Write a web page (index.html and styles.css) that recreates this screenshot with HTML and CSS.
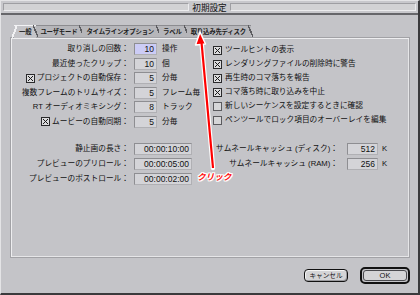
FILE: index.html
```html
<!DOCTYPE html>
<html lang="ja">
<head>
<meta charset="utf-8">
<title>初期設定</title>
<link rel="stylesheet" href="styles.css">
</head>
<body>
<div class="window">
  <div class="titlebar">
    <span class="stripe"></span>
    <span class="title">初期設定</span>
    <span class="stripe"></span>
  </div>
  <div class="main">
    <div class="tabs">
      <div class="tab active">一般</div>
      <div class="tab">ユーザモード</div>
      <div class="tab">タイムラインオプション</div>
      <div class="tab">ラベル</div>
      <div class="tab">取り込み先ディスク</div>
    </div>
    <div class="panel">
      <div class="top">
        <div class="opts">
          <span class="lbl">取り消しの回数：</span><span class="fld focus">10</span><span class="unit">操作</span>
          <span class="lbl">最近使ったクリップ：</span><span class="fld">10</span><span class="unit">個</span>
          <span class="lbl"><svg class="cb" viewBox="0 0 9 9"><rect x="0.5" y="0.5" width="8" height="8"/><path d="M2 2L7 7M7 2L2 7"/></svg>プロジェクトの自動保存：</span><span class="fld">5</span><span class="unit">分毎</span>
          <span class="lbl">複数フレームのトリムサイズ：</span><span class="fld">5</span><span class="unit">フレーム毎</span>
          <span class="lbl">RT オーディオミキシング：</span><span class="fld">8</span><span class="unit">トラック</span>
          <span class="lbl"><svg class="cb" viewBox="0 0 9 9"><rect x="0.5" y="0.5" width="8" height="8"/><path d="M2 2L7 7M7 2L2 7"/></svg>ムービーの自動同期：</span><span class="fld">5</span><span class="unit">分毎</span>
        </div>
        <ul class="checks">
          <li><svg class="cb" viewBox="0 0 9 9"><rect x="0.5" y="0.5" width="8" height="8"/><path d="M2 2L7 7M7 2L2 7"/></svg>ツールヒントの表示</li>
          <li><svg class="cb" viewBox="0 0 9 9"><rect x="0.5" y="0.5" width="8" height="8"/><path d="M2 2L7 7M7 2L2 7"/></svg>レンダリングファイルの削除時に警告</li>
          <li><svg class="cb" viewBox="0 0 9 9"><rect x="0.5" y="0.5" width="8" height="8"/><path d="M2 2L7 7M7 2L2 7"/></svg>再生時のコマ落ちを報告</li>
          <li><svg class="cb" viewBox="0 0 9 9"><rect x="0.5" y="0.5" width="8" height="8"/><path d="M2 2L7 7M7 2L2 7"/></svg>コマ落ち時に取り込みを中止</li>
          <li><svg class="cb off" viewBox="0 0 9 9"><rect x="0.5" y="0.5" width="8" height="8"/></svg>新しいシーケンスを設定するときに確認</li>
          <li><svg class="cb off" viewBox="0 0 9 9"><rect x="0.5" y="0.5" width="8" height="8"/></svg>ペンツールでロック項目のオーバーレイを編集</li>
        </ul>
      </div>
      <div class="bottom">
        <div class="times">
          <span class="lbl">静止画の長さ：</span><span class="fld">00:00:10:00</span>
          <span class="lbl">プレビューのプリロール：</span><span class="fld">00:00:05:00</span>
          <span class="lbl">プレビューのポストロール：</span><span class="fld">00:00:02:00</span>
        </div>
        <div class="cache">
          <span class="lbl">サムネールキャッシュ (ディスク)：</span><span class="fld">512</span><span class="unit">K</span>
          <span class="lbl">サムネールキャッシュ (RAM)：</span><span class="fld">256</span><span class="unit">K</span>
        </div>
      </div>
    </div>
    <div class="buttons">
      <button class="btn cancel">キャンセル</button>
      <button class="btn ok"><span>OK</span></button>
    </div>
  </div>
  <svg class="annot" viewBox="0 0 420 295" width="420" height="295">
    <line x1="201.5" y1="42" x2="213" y2="168" stroke="#fff" stroke-width="4.5" stroke-linecap="round"/>
    <polygon points="200,32 195.5,45 205.5,44" fill="#ff0000" stroke="#fff" stroke-width="1.5" stroke-linejoin="round"/>
    <line x1="201.5" y1="42" x2="213" y2="168" stroke="#ff0000" stroke-width="2.2"/>
  </svg>
  <div class="click">クリック</div>
</div>
</body>
</html>
```
FILE: styles.css
```css
html, body {
  margin: 0;
  padding: 0;
  background: #c4c4c8;
}

body {
  font-family: "Liberation Sans", "Noto Sans CJK JP", sans-serif;
  color: #111;
}

.window {
  position: relative;
  width: 420px;
  height: 295px;
  box-sizing: border-box;
  background: #c4c4c8;
  border-top: 1px solid #e4e4e6;
  border-left: 1px solid #e4e4e6;
  border-right: 2px solid #3a3a3c;
  border-bottom: 2px solid #3a3a3c;
  overflow: hidden;
}

/* title bar */
.titlebar {
  display: flex;
  align-items: center;
  gap: 3px;
  height: 12px;
  padding: 0 2px;
  border-bottom: 2px solid #66666a;
  background: #c8c8cc;
}

.stripe {
  flex: 1;
  height: 8px;
  box-sizing: border-box;
  background: #d2d2d4;
  border-top: 1px solid #9e9ea2;
  border-left: 1px solid #9e9ea2;
  border-bottom: 1px solid #ececee;
  border-right: 1px solid #ececee;
}

.title {
  font-family: "Noto Sans CJK JP", sans-serif;
  font-size: 8.6px;
  line-height: 12px;
  color: #111;
}

.main {
  padding: 10px 8px 0 9px;
}

/* tabs */
.tabs {
  position: relative;
  z-index: 1;
  display: flex;
  align-items: flex-end;
  height: 12px;
  margin-left: 4px;
}

.tab {
  position: relative;
  box-sizing: border-box;
  height: 12px;
  padding: 0 5px 0 4px;
  background: #b6b6ba;
  border-top: 1px solid #8c8c90;
  font-family: "Noto Sans CJK JP", sans-serif;
  font-size: 6.4px;
  font-weight: bold;
  letter-spacing: -0.2px;
  line-height: 11px;
  color: #222;
  white-space: nowrap;
}

.tab::after {
  content: "";
  position: absolute;
  top: -1px;
  right: -2px;
  width: 5px;
  height: 12px;
  background: linear-gradient(to top right, transparent 42%, #5c5c60 42%, #5c5c60 58%, transparent 58%);
}

.tab.active {
  height: 13px;
  margin-bottom: -1px;
  padding-left: 5px;
  background: #c4c4c8;
  border-top-color: #f2f2f4;
  z-index: 2;
}

.tab.active::before {
  content: "";
  position: absolute;
  top: -1px;
  left: -2px;
  width: 5px;
  height: 13px;
  background: linear-gradient(to bottom right, transparent 40%, #f2f2f4 40%, #f2f2f4 60%, transparent 60%);
}

/* panel */
.panel {
  box-sizing: border-box;
  height: 221px;
  border: 1px solid #a2a2a6;
  box-shadow: inset 1px 1px 0 #eeeef0, inset -1px -1px 0 #e6e6e8;
  font-family: "Liberation Sans", "Noto Sans CJK JP", sans-serif;
  font-size: 7.7px;
  line-height: 12px;
}

.top {
  display: flex;
  padding-top: 5px;
}

.opts {
  display: grid;
  grid-template-columns: 118px 23px auto;
  grid-auto-rows: 12px;
  column-gap: 5px;
  row-gap: 2.6px;
  align-items: center;
  width: 202px;
}

.lbl {
  justify-self: end;
  display: flex;
  align-items: center;
  gap: 2px;
  white-space: nowrap;
}

.fld {
  display: block;
  box-sizing: border-box;
  height: 12px;
  padding-right: 2px;
  text-align: right;
  background: #d4d4d8;
  border: 1px solid #8e8e92;
  border-right-color: #b0b0b4;
  border-bottom-color: #b0b0b4;
  font-family: "Liberation Sans", sans-serif;
  font-size: 8.5px;
  line-height: 10px;
  color: #111;
}

.fld.focus {
  background: #ccccf6;
}

.unit {
  white-space: nowrap;
}

.cb {
  width: 9px;
  height: 9px;
  flex: none;
}

.cb rect {
  fill: #dcdcde;
  stroke: #2a2a2c;
  stroke-width: 1;
}

.cb path {
  stroke: #1a1a1a;
  stroke-width: 1;
  fill: none;
}

.cb.off rect {
  stroke: #5a5a5e;
  fill: #d6d6d8;
}

.checks {
  list-style: none;
  margin: 0;
  padding: 0;
  display: flex;
  flex-direction: column;
}

.checks li {
  display: flex;
  align-items: center;
  gap: 3px;
  height: 14px;
  white-space: nowrap;
}

.bottom {
  display: flex;
  margin-top: 15px;
}

.times {
  display: grid;
  grid-template-columns: 118px 58px;
  grid-auto-rows: 12px;
  column-gap: 5px;
  row-gap: 3px;
  align-items: center;
}

.cache {
  display: grid;
  grid-template-columns: 143px 31px auto;
  grid-auto-rows: 12px;
  column-gap: 4px;
  row-gap: 3px;
  align-items: center;
  margin-left: 8px;
}

.cache .lbl {
  margin-right: 5px;
}

/* buttons */
.buttons {
  display: flex;
  justify-content: flex-end;
  align-items: center;
  gap: 12px;
  height: 17px;
  margin-top: 9px;
}

.btn {
  box-sizing: border-box;
  margin: 0;
  padding: 0;
  font-family: "Noto Sans CJK JP", sans-serif;
  color: #111;
  cursor: default;
}

.cancel {
  width: 44px;
  height: 13px;
  border: 1px solid #111;
  border-radius: 4px;
  background: #d4d4d6;
  box-shadow: inset 1px 1px 0 #f4f4f4, inset -1px -1px 0 #9a9a9e;
  font-size: 6.6px;
  line-height: 11px;
}

.ok {
  width: 50px;
  height: 17px;
  border: 2px solid #111;
  border-radius: 5px;
  padding: 1px;
  background: #c4c4c8;
}

.ok span {
  display: block;
  height: 100%;
  box-sizing: border-box;
  border: 1px solid #4a4a4e;
  border-radius: 3px;
  background: #d4d4d6;
  font-family: "Liberation Sans", sans-serif;
  font-size: 7.5px;
  line-height: 9px;
}

/* annotation overlay */
.annot {
  position: absolute;
  top: -1px;
  left: -1px;
  z-index: 5;
  pointer-events: none;
}

.click {
  position: absolute;
  left: 196px;
  top: 169px;
  z-index: 6;
  font-family: "Noto Sans CJK JP", sans-serif;
  font-size: 8.6px;
  font-weight: bold;
  font-style: italic;
  line-height: 12px;
  color: #ff1010;
  text-shadow: 1px 0 0 #fff, -1px 0 0 #fff, 0 1px 0 #fff, 0 -1px 0 #fff, 1px 1px 0 #fff, -1px -1px 0 #fff, 1px -1px 0 #fff, -1px 1px 0 #fff;
}
```
